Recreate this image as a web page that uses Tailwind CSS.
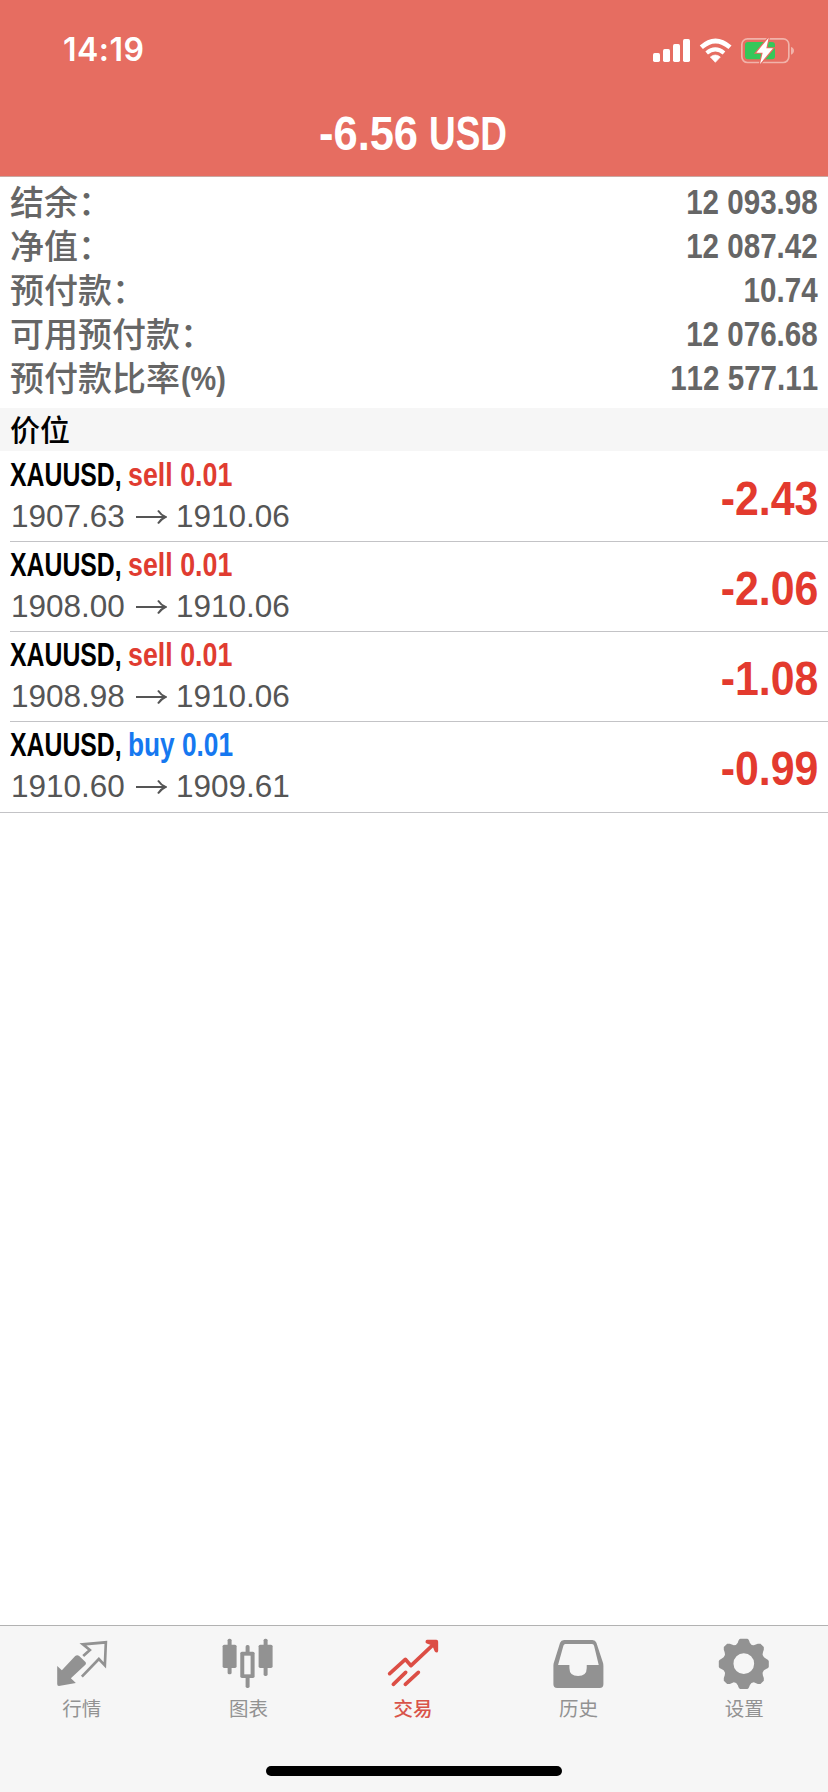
<!DOCTYPE html>
<html lang="zh-CN">
<head>
<meta charset="utf-8">
<title>交易</title>
<script src="https://cdn.jsdelivr.net/npm/@tailwindcss/browser@4"></script>
</head>
<body class="bg-white">
<div class="flex h-[1792px] w-[828px] flex-col overflow-hidden bg-white font-['Liberation_Sans','Noto_Sans_CJK_SC',sans-serif] [font-kerning:none]">
  <header class="h-[177px] shrink-0 border-b border-[#c9a8a2] bg-[#e66d61] text-white">
    <div class="flex h-[99px] items-center justify-between pl-[63px] pr-8">
      <span class="font-['Inter',sans-serif] text-[32px] leading-none font-semibold tracking-[0.5px]">14:19</span>
      <svg class="h-7 w-36" viewBox="156 45 432 84" fill="#fff">
        <rect x="159" y="96" width="21" height="27" rx="5"/><rect x="189" y="84" width="21" height="39" rx="5"/><rect x="219" y="69" width="21" height="54" rx="5"/><rect x="249" y="54" width="21" height="69" rx="5"/>
        <path d="M346 124 L331 108 Q346 96 361 108Z" stroke="#fff" stroke-width="2" stroke-linejoin="round"/>
        <path d="M320 96 Q346 74 372 96" fill="none" stroke="#fff" stroke-width="12"/>
        <path d="M304 79 Q346 41 390 79" fill="none" stroke="#fff" stroke-width="14"/>
        <rect x="425.500" y="53.500" width="141" height="71" rx="17" fill="none" stroke="#f1b3aa" stroke-width="5"/>
        <path d="M573 78 V101 Q582 98 582 89.500 Q582 81 573 78Z" fill="#f1b3aa"/>
        <rect x="435" y="63" width="90" height="52" rx="9" fill="#34c759"/>
        <path d="M506 50 L469 95 H488 L480 129 L519 82 H499Z" fill="#fff" stroke="#e66d61" stroke-width="7" paint-order="stroke"/>
      </svg>
    </div>
    <h1 class="flex h-[70px] items-center pl-[319px] text-[48px] leading-none font-bold whitespace-nowrap"><span class="w-[110px]"><span class="inline-block origin-left scale-x-[0.905]">-6.56</span></span><span class="origin-left scale-x-[0.77]">USD</span></h1>
  </header>

  <section class="flex h-[231px] shrink-0 flex-col pt-[3px] pr-[10px] pl-[10px] text-[34px] leading-[44px] text-[#666]">
    <div class="flex h-11 justify-between"><span class="mt-px font-medium">结余：</span><span class="origin-right scale-x-[0.845] text-[35px] font-bold">12 093.98</span></div>
    <div class="flex h-11 justify-between"><span class="mt-px font-medium">净值：</span><span class="origin-right scale-x-[0.845] text-[35px] font-bold">12 087.42</span></div>
    <div class="flex h-11 justify-between"><span class="mt-px font-medium">预付款：</span><span class="origin-right scale-x-[0.845] text-[35px] font-bold">10.74</span></div>
    <div class="flex h-11 justify-between"><span class="mt-px font-medium">可用预付款：</span><span class="origin-right scale-x-[0.845] text-[35px] font-bold">12 076.68</span></div>
    <div class="flex h-11 justify-between"><span class="mt-px flex font-medium">预付款比率<span class="-mt-px ml-px origin-left scale-x-[0.85] font-bold">(%)</span></span><span class="origin-right scale-x-[0.845] text-[35px] font-bold">112 577.11</span></div>
  </section>

  <h2 class="h-[43px] shrink-0 bg-[#f6f6f6] pl-[10px] text-[30px] leading-[45px] font-medium text-black">价位</h2>

  <ul class="flex flex-col border-b border-[#c3c3c6] pt-px">
    <li class="flex h-[90px] pl-[10px]">
      <div class="flex grow justify-between border-b border-[#c3c3c6] pr-[10px]">
        <div class="flex flex-col pt-[3px]">
          <div class="flex h-[41px] text-[33px] leading-10 font-bold whitespace-nowrap"><span class="w-[118px]"><span class="inline-block origin-left scale-x-[0.752] text-black">XAUUSD,</span></span><span class="origin-left scale-x-[0.812] text-[#e03c31]">sell 0.01</span></div>
          <div class="flex h-[41px] items-center pl-px text-[31.5px] leading-none text-[#555]"><span>1907.63</span><svg class="mr-[9px] ml-2.5 h-4 w-8" viewBox="0 0 32 16" fill="none" stroke="#555" stroke-width="2"><path d="M1 8H30M23 1.500Q26 6 30.500 8Q26 10 23 14.500"/></svg><span>1910.06</span></div>
        </div>
        <span class="origin-right scale-x-[0.893] pt-0.5 text-[48px] leading-[90px] font-bold text-[#e33a2e]">-2.43</span>
      </div>
    </li>
    <li class="flex h-[90px] pl-[10px]">
      <div class="flex grow justify-between border-b border-[#c3c3c6] pr-[10px]">
        <div class="flex flex-col pt-[3px]">
          <div class="flex h-[41px] text-[33px] leading-10 font-bold whitespace-nowrap"><span class="w-[118px]"><span class="inline-block origin-left scale-x-[0.752] text-black">XAUUSD,</span></span><span class="origin-left scale-x-[0.812] text-[#e03c31]">sell 0.01</span></div>
          <div class="flex h-[41px] items-center pl-px text-[31.5px] leading-none text-[#555]"><span>1908.00</span><svg class="mr-[9px] ml-2.5 h-4 w-8" viewBox="0 0 32 16" fill="none" stroke="#555" stroke-width="2"><path d="M1 8H30M23 1.500Q26 6 30.500 8Q26 10 23 14.500"/></svg><span>1910.06</span></div>
        </div>
        <span class="origin-right scale-x-[0.893] pt-0.5 text-[48px] leading-[90px] font-bold text-[#e33a2e]">-2.06</span>
      </div>
    </li>
    <li class="flex h-[90px] pl-[10px]">
      <div class="flex grow justify-between border-b border-[#c3c3c6] pr-[10px]">
        <div class="flex flex-col pt-[3px]">
          <div class="flex h-[41px] text-[33px] leading-10 font-bold whitespace-nowrap"><span class="w-[118px]"><span class="inline-block origin-left scale-x-[0.752] text-black">XAUUSD,</span></span><span class="origin-left scale-x-[0.812] text-[#e03c31]">sell 0.01</span></div>
          <div class="flex h-[41px] items-center pl-px text-[31.5px] leading-none text-[#555]"><span>1908.98</span><svg class="mr-[9px] ml-2.5 h-4 w-8" viewBox="0 0 32 16" fill="none" stroke="#555" stroke-width="2"><path d="M1 8H30M23 1.500Q26 6 30.500 8Q26 10 23 14.500"/></svg><span>1910.06</span></div>
        </div>
        <span class="origin-right scale-x-[0.893] pt-0.5 text-[48px] leading-[90px] font-bold text-[#e33a2e]">-1.08</span>
      </div>
    </li>
    <li class="flex h-[90px] pl-[10px]">
      <div class="flex grow justify-between pr-[10px]">
        <div class="flex flex-col pt-[3px]">
          <div class="flex h-[41px] text-[33px] leading-10 font-bold whitespace-nowrap"><span class="w-[118px]"><span class="inline-block origin-left scale-x-[0.752] text-black">XAUUSD,</span></span><span class="origin-left scale-x-[0.795] text-[#1678f0]">buy 0.01</span></div>
          <div class="flex h-[41px] items-center pl-px text-[31.5px] leading-none text-[#555]"><span>1910.60</span><svg class="mr-[9px] ml-2.5 h-4 w-8" viewBox="0 0 32 16" fill="none" stroke="#555" stroke-width="2"><path d="M1 8H30M23 1.500Q26 6 30.500 8Q26 10 23 14.500"/></svg><span>1909.61</span></div>
        </div>
        <span class="origin-right scale-x-[0.893] pt-0.5 text-[48px] leading-[90px] font-bold text-[#e33a2e]">-0.99</span>
      </div>
    </li>
  </ul>

  <div class="grow"></div>

  <footer class="flex h-[167px] shrink-0 flex-col items-center border-t border-[#b2b2b2] bg-[#f6f6f6]">
    <nav class="grid h-[140px] w-full grid-cols-5 pt-3 text-[19.5px] text-[#929292]">
      <a class="flex flex-col items-center">
        <svg class="size-[52px] overflow-visible" viewBox="170.400 84 156 156">
          <path d="M171 168 L185 181 L225 138 Q231 133 237 138 L255 155 Q260 160 254 166 L212 205 L227 219 L176 228 Q171 228 171 222Z" fill="#929292"/>
          <path d="M249 138 L269 120 L248 103 L317 97 L314 166 L296 147 L245 200" fill="none" stroke="#929292" stroke-width="8"/>
        </svg>
        <span class="mt-1.5 -ml-0.5 leading-[26px]">行情</span>
      </a>
      <a class="flex flex-col items-center">
        <svg class="size-[52px] overflow-visible" viewBox="667.200 84 156 156" fill="#929292">
          <rect x="684" y="86" width="12" height="107" rx="5"/><rect x="669" y="104" width="42" height="70" rx="5"/>
          <rect x="792" y="86" width="12" height="112" rx="5"/><rect x="777" y="104" width="42" height="70" rx="5"/>
          <rect x="738" y="105" width="12" height="129" rx="5"/><rect x="722" y="125" width="43" height="79" rx="5"/><rect x="734" y="137" width="19" height="56" fill="#f6f6f6"/>
        </svg>
        <span class="mt-1.5 leading-[26px]">图表</span>
      </a>
      <a class="flex flex-col items-center text-[#d9544a]">
        <svg class="size-[52px] overflow-visible" viewBox="144 84 156 156" fill="none" stroke="#dc4e45" stroke-width="11" stroke-linecap="round" stroke-linejoin="round">
          <path d="M149 191 L196 148 L213 167 L286 98M160 223 L197 187M196 223 L235 187"/>
          <path d="M262 95 H289 V122 L281 102Z" fill="#dc4e45"/>
        </svg>
        <span class="mt-1.5 -ml-0.5 leading-[26px] font-medium">交易</span>
      </a>
      <a class="flex flex-col items-center">
        <svg class="size-[52px] overflow-visible" viewBox="640.800 84 156 156">
          <path fill="#929292" fill-rule="evenodd" d="M671 90 H756 Q765 90 768 98 L787 156 Q789 161 789 167 V223 Q789 234 778 234 H650 Q639 234 639 223 V167 Q639 161 641 156 L659 98 Q662 90 671 90Z M675 102 Q670 102 669 107 L653 165 H687 V174 Q687 198 713 198 Q739 198 739 174 V165 H775 L761 107 Q760 102 755 102Z"/>
        </svg>
        <span class="mt-1.5 -ml-0.5 leading-[26px]">历史</span>
      </a>
      <a class="flex flex-col items-center">
        <svg class="size-[52px] overflow-visible" viewBox="237.600 84 156 156">
          <path fill="#929292" fill-rule="evenodd" d="M302 86 H322 Q327 86 330 98 Q334 106 342 106 L354 101 H362 L372 111 V119 Q367 131 369 136 Q371 143 379 146 Q387 150 387 154 V170 Q387 174 379 177 Q371 180 369 187 Q367 192 372 204 V212 L362 222 H354 L342 217 Q334 217 330 226 Q327 237 322 237 H302 Q297 237 294 226 Q290 217 282 217 L270 222 H262 L252 212 V204 Q257 192 255 187 Q253 180 245 177 Q237 174 237 170 V154 Q237 150 245 146 Q253 143 255 136 Q257 131 252 119 V111 L262 101 H270 L282 106 Q290 106 294 98 Q297 86 302 86Z M312 130 A31 31 0 1 0 312 192 A31 31 0 1 0 312 130Z"/>
        </svg>
        <span class="mt-1.5 -ml-0.5 leading-[26px]">设置</span>
      </a>
    </nav>
    <div class="h-2.5 w-[296px] rounded-full bg-black"></div>
  </footer>
</div>
</body>
</html>
